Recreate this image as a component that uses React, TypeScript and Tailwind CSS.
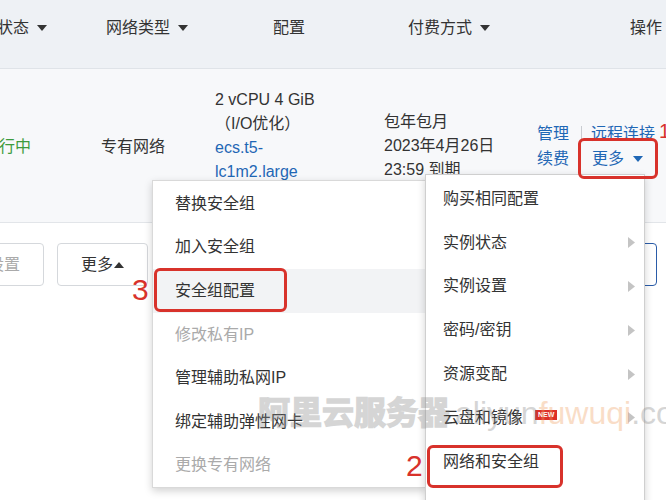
import React from 'react';

type MenuItem = {
    label: string;
    disabled?: boolean;
    active?: boolean;
    sub?: boolean;
    badge?: boolean;
}

const leftItems: MenuItem[] = [
    { label: '替换安全组' },
    { label: '加入安全组' },
    { label: '安全组配置', active: true },
    { label: '修改私有IP', disabled: true },
    { label: '管理辅助私网IP' },
    { label: '绑定辅助弹性网卡' },
    { label: '更换专有网络', disabled: true },
];

const rightItems: MenuItem[] = [
    { label: '购买相同配置' },
    { label: '实例状态', sub: true },
    { label: '实例设置', sub: true },
    { label: '密码/密钥', sub: true },
    { label: '资源变配', sub: true },
    { label: '云盘和镜像', sub: true, badge: true },
    { label: '网络和安全组' },
];

function Caret({ up = false }: { up?: boolean }) {
    return (
        <svg width="10" height="6" viewBox="0 0 10 6" className="inline-block">
            <path d={up ? 'M0 6 L5 0 L10 6 Z' : 'M0 0 L10 0 L5 6 Z'} fill="currentColor" />
        </svg>
    );
}

function SubArrow() {
    return (
        <svg width="7" height="11" viewBox="0 0 7 11">
            <path d="M0 0 L7 5.5 L0 11 Z" fill="#c4c4c4" />
        </svg>
    );
}

export default function App() {
    return (
        <div
            className="relative w-[666px] h-[500px] overflow-hidden bg-white text-[16px] text-[#333]"
            style={{ fontFamily: '"Liberation Sans", "Noto Sans CJK SC", sans-serif' }}
        >
            {/* table header */}
            <div className="flex h-[69px] items-start pt-[16px] leading-[24px] bg-[#eef1f5] border-b border-[#dfe3e8]">
                <div className="w-[109px] shrink-0 -ml-[3px] flex items-center gap-[8px]">状态 <Caret /></div>
                <div className="w-[167px] shrink-0 flex items-center gap-[8px]">网络类型 <Caret /></div>
                <div className="w-[135px] shrink-0">配置</div>
                <div className="w-[222px] shrink-0 flex items-center gap-[8px]">付费方式 <Caret /></div>
                <div className="shrink-0 whitespace-nowrap">操作</div>
            </div>

            {/* table row */}
            <div className="flex h-[154px] bg-[#f7f8fa] border-b border-[#e2e5e9] leading-[24px]">
                <div className="w-[118px] shrink-0 -ml-[17px] pt-[66px] text-[#3d9b3d]">运行中</div>
                <div className="w-[114px] shrink-0 pt-[66px]">专有网络</div>
                <div className="w-[169px] shrink-0 pt-[19px]">
                    <div>2 vCPU 4 GiB</div>
                    <div>（I/O优化）</div>
                    <div className="text-[#1f67b5]">ecs.t5-</div>
                    <div className="text-[#1f67b5]">lc1m2.large</div>
                </div>
                <div className="w-[153px] shrink-0 pt-[41px]">
                    <div>包年包月</div>
                    <div>2023年4月26日</div>
                    <div>23:59 到期</div>
                </div>
                <div className="shrink-0 pt-[52px] flex text-[#1f67b5] whitespace-nowrap">
                    <div className="leading-[25px]">
                        <div>管理</div>
                        <div>续费</div>
                    </div>
                    <div className="w-px h-[16px] bg-[#c9ccd1] mt-[5px] ml-[12px] mr-[9px]" />
                    <div className="leading-[25px]">
                        <div>远程连接</div>
                        <div className="flex items-center gap-[9px] pl-[1px]">更多 <Caret /></div>
                    </div>
                </div>
            </div>

            {/* toolbar */}
            <div className="flex gap-[13px] pt-[20px] -ml-[40px]">
                <button className="h-[43px] w-[84px] border border-[#d5d8dc] rounded-[4px] bg-white text-[#aaa] pl-[4px]">设置</button>
                <button className="h-[43px] w-[91px] border border-[#d5d8dc] rounded-[4px] bg-white text-[#333] flex items-center justify-center gap-[1px]">
                    更多<Caret up />
                </button>
                <div className="flex-1" />
                <button className="h-[43px] w-[96px] mr-[9px] border border-[#2a5ca8] rounded-[4px] bg-white text-[#2a5ca8]">同步</button>
            </div>

            {/* secondary menu */}
            <div className="absolute left-[152px] top-[180px] w-[275px] h-[308px] bg-white border border-[#d9d9d9] shadow-[0_3px_8px_rgba(0,0,0,0.18)] pt-[1px]">
                {leftItems.map((item) => (
                    <div
                        key={item.label}
                        className={`h-[43.6px] flex items-center pl-[22px] ${item.active ? 'bg-[#f2f3f5]' : ''} ${item.disabled ? 'text-[#aaa]' : 'text-[#333]'}`}
                    >
                        {item.label}
                    </div>
                ))}
            </div>

            {/* primary dropdown */}
            <div className="absolute left-[425px] top-[174px] w-[220px] h-[340px] bg-white border border-[#cfcfcf] shadow-[0_3px_8px_rgba(0,0,0,0.18)] pt-[2px]">
                {rightItems.map((item) => (
                    <div key={item.label} className="h-[43.8px] flex items-center pl-[17px] pr-[9px]">
                        <span>{item.label}</span>
                        {item.badge && (
                            <span className="ml-[12px] -mt-[6px] bg-[#dd2f27] text-white text-[7px] leading-[10px] px-[3px] font-bold">NEW</span>
                        )}
                        <span className="flex-1" />
                        {item.sub && <SubArrow />}
                    </div>
                ))}
            </div>

            {/* annotations */}
            <div className="absolute left-[578px] top-[138px] w-[80px] h-[41px] border-[3px] border-[#d8322b] rounded-[6px]" />
            <div className="absolute left-[659px] top-[116px] text-[20px] text-[#d8322b]">1</div>

            <div className="absolute left-[154px] top-[268px] w-[133px] h-[44px] border-[3px] border-[#d8322b] rounded-[6px]" />
            <div className="absolute left-[132px] top-[270px] text-[30px] leading-[40px] text-[#d8322b]">3</div>

            <div className="absolute left-[427px] top-[445px] w-[136px] h-[43px] border-[3px] border-[#d8322b] rounded-[6px]" />
            <div className="absolute left-[406px] top-[446px] text-[30px] leading-[40px] text-[#d8322b]">2</div>

            {/* watermark */}
            <div className="absolute left-[258px] top-[390px] flex items-baseline whitespace-nowrap pointer-events-none text-[32px] leading-[40px] opacity-35">
                <span
                    className="font-bold text-[#8a8a8a] [-webkit-text-stroke:1.5px_#8a8a8a]"
                    style={{ fontFamily: '"Noto Sans CJK SC", sans-serif' }}
                >
                    阿里云服务器
                </span>
                <span className="ml-[5px] text-[#8a8a8a]">aliyun</span>
                <span className="text-[#f0a060]">fuwuqi</span>
                <span className="text-[#8a8a8a]">.com</span>
            </div>
        </div>
    );
}
